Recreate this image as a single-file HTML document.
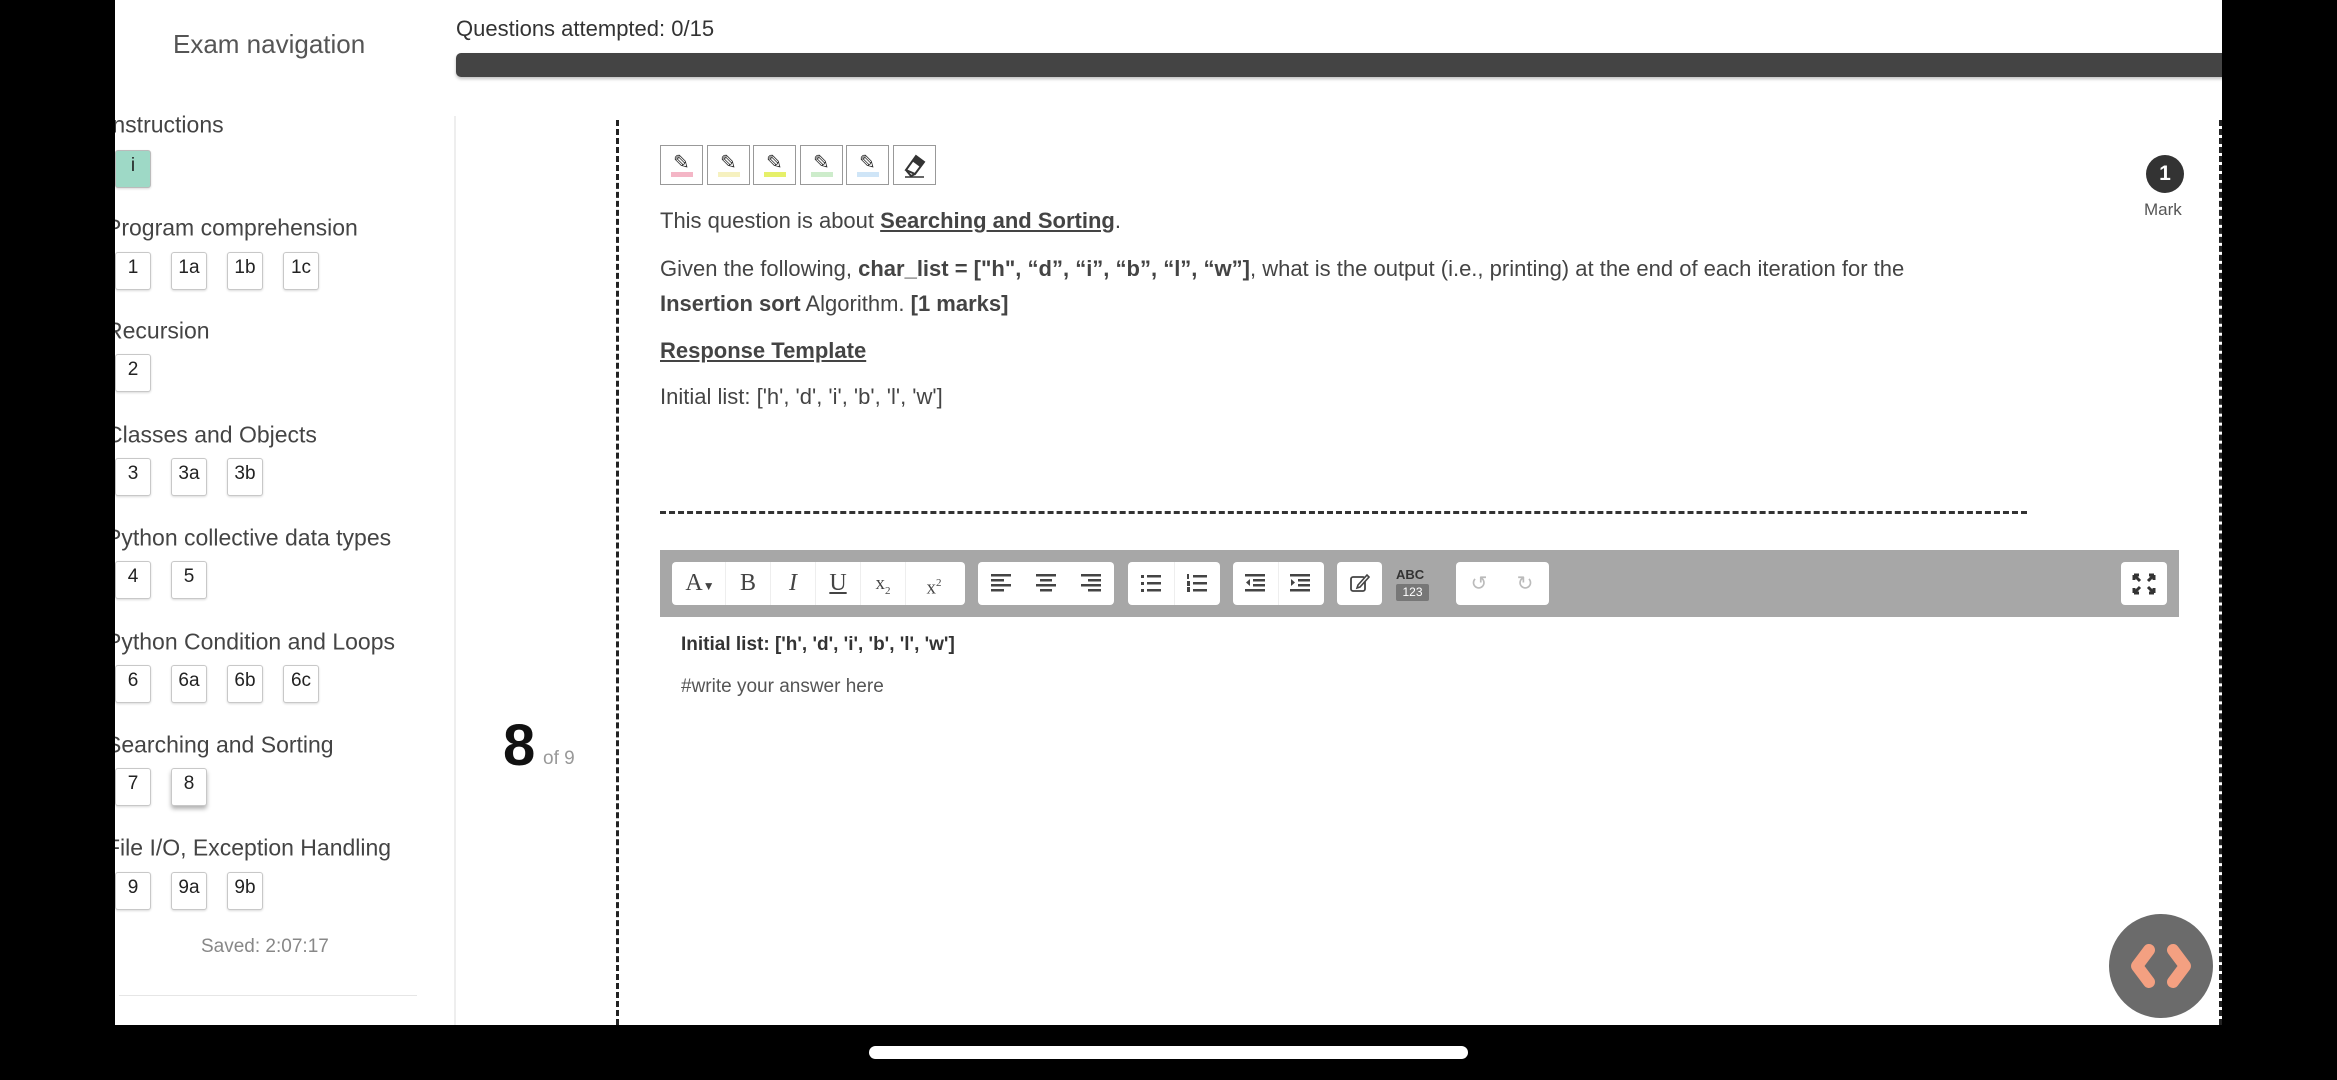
<!DOCTYPE html>
<html><head><meta charset="utf-8"><style>
*{margin:0;padding:0;box-sizing:border-box}
body{width:2337px;height:1080px;background:#000;position:relative;overflow:hidden;font-family:"Liberation Sans",sans-serif;color:#333}
#pg{position:absolute;left:115px;top:0;width:2107px;height:1025px;background:#fff;overflow:hidden}
.a{position:absolute;white-space:nowrap}
.h{position:absolute;left:-9px;font-size:23px;color:#444;transform:translateY(-50%)}
.b{position:absolute;width:36px;height:38px;border:1px solid #c8c8c8;border-radius:3px;font-size:19px;text-align:center;line-height:30px;color:#222;background:#fff;box-shadow:0 1px 2px rgba(0,0,0,.15)}
.hl{position:absolute;top:145px;width:43px;height:40px;border:1px solid #999;background:#fff}
.hl i{position:absolute;left:10px;bottom:7px;width:22px;height:5px}
.grp{position:absolute;top:562px;height:43px;background:#fff;border-radius:4px}
.ic{position:absolute;top:0;height:43px;line-height:43px;text-align:center;font-family:"Liberation Serif",serif;font-size:24px;color:#444}
.dv{position:absolute;top:0;height:43px;width:1px;background:#eee}
.sv{position:absolute;top:11px}
</style></head><body>
<div id="pg">
<div class="a" style="left:58px;top:29px;font-size:26px;color:#555">Exam navigation</div>
<div class="a" style="left:341px;top:16px;font-size:22px;color:#333">Questions attempted: 0/15</div>
<div class="a" style="left:341px;top:53px;width:1780px;height:24px;background:#444;border-radius:5px 0 0 5px;box-shadow:0 2px 3px rgba(0,0,0,.25)"></div>
<div class="a" style="left:339px;top:116px;width:2px;height:920px;background:#eee"></div>
<div class="a" style="left:4px;top:995px;width:298px;height:1px;background:#e6e6e6"></div>

<div class="h" style="top:125px">Instructions</div>
<div class="b" style="left:0;top:150px;background:#9ed9c6;border-color:#bbb">i</div>
<div class="h" style="top:228px">Program comprehension</div>
<div class="b" style="left:0;top:252px">1</div><div class="b" style="left:56px;top:252px">1a</div><div class="b" style="left:112px;top:252px">1b</div><div class="b" style="left:168px;top:252px">1c</div>
<div class="h" style="top:331px">Recursion</div>
<div class="b" style="left:0;top:354px">2</div>
<div class="h" style="top:435px">Classes and Objects</div>
<div class="b" style="left:0;top:458px">3</div><div class="b" style="left:56px;top:458px">3a</div><div class="b" style="left:112px;top:458px">3b</div>
<div class="h" style="top:538px">Python collective data types</div>
<div class="b" style="left:0;top:561px">4</div><div class="b" style="left:56px;top:561px">5</div>
<div class="h" style="top:642px">Python Condition and Loops</div>
<div class="b" style="left:0;top:665px">6</div><div class="b" style="left:56px;top:665px">6a</div><div class="b" style="left:112px;top:665px">6b</div><div class="b" style="left:168px;top:665px">6c</div>
<div class="h" style="top:745px">Searching and Sorting</div>
<div class="b" style="left:0;top:768px">7</div><div class="b" style="left:56px;top:768px;box-shadow:0 3px 4px rgba(0,0,0,.3)">8</div>
<div class="h" style="top:848px">File I/O, Exception Handling</div>
<div class="b" style="left:0;top:872px">9</div><div class="b" style="left:56px;top:872px">9a</div><div class="b" style="left:112px;top:872px">9b</div>
<div class="a" style="left:86px;top:936px;font-size:19px;color:#888">Saved: 2:07:17</div>

<div class="a" style="left:388px;top:712px;font-size:58px;font-weight:bold;color:#111">8</div>
<div class="a" style="left:428px;top:748px;font-size:19px;color:#999">of 9</div>
<div class="a" style="left:501px;top:120px;height:905px;border-left:3px dashed #222"></div>
<div class="a" style="left:2104px;top:120px;height:905px;border-left:3px dashed #222"></div>

<div class="hl" style="left:545px"><span class="a" style="left:12px;top:4px;font-size:20px;color:#333">✎</span><i style="background:#f4b6c6"></i></div>
<div class="hl" style="left:592px"><span class="a" style="left:12px;top:4px;font-size:20px;color:#333">✎</span><i style="background:#f6f1c0"></i></div>
<div class="hl" style="left:638px"><span class="a" style="left:12px;top:4px;font-size:20px;color:#333">✎</span><i style="background:#e6f06a"></i></div>
<div class="hl" style="left:685px"><span class="a" style="left:12px;top:4px;font-size:20px;color:#333">✎</span><i style="background:#cdeccb"></i></div>
<div class="hl" style="left:731px"><span class="a" style="left:12px;top:4px;font-size:20px;color:#333">✎</span><i style="background:#cfe5f7"></i></div>
<div class="hl" style="left:778px"><svg class="a" style="left:8px;top:6px" width="26" height="28" viewBox="0 0 26 28"><path d="M4 18 L14 4 L22 10 L13 22 Z M4 18 L9 24 L13 22" fill="none" stroke="#333" stroke-width="2"/><path d="M14 4 L22 10 L18 15 L10 9 Z" fill="#333"/><path d="M3 25 H22" stroke="#333" stroke-width="1.5"/></svg></div>

<div class="a" style="left:545px;top:208px;font-size:22px;color:#444">This question is about <b style="text-decoration:underline">Searching and Sorting</b>.</div>
<div class="a" style="left:545px;top:256px;font-size:22px;color:#444">Given the following, <b>char_list = ["h", “d”, “i”, “b”, “l”, “w”]</b>, what is the output (i.e., printing) at the end of each iteration for the</div>
<div class="a" style="left:545px;top:291px;font-size:22px;color:#444"><b>Insertion sort</b> Algorithm. <b>[1 marks]</b></div>
<div class="a" style="left:545px;top:338px;font-size:22px;color:#444;font-weight:bold;text-decoration:underline">Response Template</div>
<div class="a" style="left:545px;top:384px;font-size:22px;color:#444">Initial list: ['h', 'd', 'i', 'b', 'l', 'w']</div>
<div class="a" style="left:545px;top:511px;width:1367px;border-top:3px dashed #333"></div>

<div class="a" style="left:545px;top:550px;width:1519px;height:67px;background:#a7a7a7"></div>
<div class="grp" style="left:557px;width:293px">
 <div class="ic" style="left:6px;width:44px">A<span style="font-size:12px">▼</span></div><div class="dv" style="left:53px"></div>
 <div class="ic" style="left:54px;width:44px">B</div><div class="dv" style="left:98px"></div>
 <div class="ic" style="left:99px;width:44px;font-style:italic">I</div><div class="dv" style="left:143px"></div>
 <div class="ic" style="left:144px;width:44px;text-decoration:underline">U</div><div class="dv" style="left:188px"></div>
 <div class="ic" style="left:189px;width:44px;font-size:19px">x<sub style="font-size:11px">2</sub></div><div class="dv" style="left:233px"></div>
 <div class="ic" style="left:234px;width:56px;font-size:19px">x<sup style="font-size:11px">2</sup></div>
</div>
<div class="grp" style="left:863px;width:136px">
 <svg class="sv" style="left:13px" width="20" height="20"><g fill="#444"><rect x="0" y="1" width="20" height="2.5"/><rect x="0" y="6" width="13" height="2.5"/><rect x="0" y="11" width="20" height="2.5"/><rect x="0" y="16" width="13" height="2.5"/></g></svg>
 <svg class="sv" style="left:58px" width="20" height="20"><g fill="#444"><rect x="0" y="1" width="20" height="2.5"/><rect x="4" y="6" width="12" height="2.5"/><rect x="0" y="11" width="20" height="2.5"/><rect x="4" y="16" width="12" height="2.5"/></g></svg>
 <svg class="sv" style="left:103px" width="20" height="20"><g fill="#444"><rect x="0" y="1" width="20" height="2.5"/><rect x="7" y="6" width="13" height="2.5"/><rect x="0" y="11" width="20" height="2.5"/><rect x="7" y="16" width="13" height="2.5"/></g></svg>
</div>
<div class="grp" style="left:1013px;width:92px">
 <svg class="sv" style="left:13px" width="20" height="20"><g fill="#444"><rect x="0" y="2" width="3" height="3"/><rect x="6" y="2" width="14" height="2.5"/><rect x="0" y="9" width="3" height="3"/><rect x="6" y="9" width="14" height="2.5"/><rect x="0" y="16" width="3" height="3"/><rect x="6" y="16" width="14" height="2.5"/></g></svg>
 <div class="dv" style="left:46px"></div>
 <svg class="sv" style="left:59px" width="20" height="20"><g fill="#444"><rect x="0" y="1" width="2" height="5"/><rect x="0" y="8" width="3" height="5"/><rect x="0" y="14" width="3" height="5"/><rect x="6" y="2" width="14" height="2.5"/><rect x="6" y="9" width="14" height="2.5"/><rect x="6" y="16" width="14" height="2.5"/></g></svg>
</div>
<div class="grp" style="left:1118px;width:91px">
 <svg class="sv" style="left:12px" width="20" height="20"><g fill="#444"><rect x="0" y="1" width="20" height="2.5"/><rect x="8" y="6" width="12" height="2.5"/><rect x="8" y="11" width="12" height="2.5"/><rect x="0" y="16" width="20" height="2.5"/><path d="M5 6 L1 9.5 L5 13 Z"/></g></svg>
 <div class="dv" style="left:45px"></div>
 <svg class="sv" style="left:57px" width="20" height="20"><g fill="#444"><rect x="0" y="1" width="20" height="2.5"/><rect x="8" y="6" width="12" height="2.5"/><rect x="8" y="11" width="12" height="2.5"/><rect x="0" y="16" width="20" height="2.5"/><path d="M1 6 L5 9.5 L1 13 Z"/></g></svg>
</div>
<div class="grp" style="left:1222px;width:45px"><svg class="sv" style="left:13px" width="20" height="20"><rect x="1" y="4" width="14" height="14" rx="2" fill="none" stroke="#444" stroke-width="1.8"/><path d="M8 12 L17 2 L19 4 L10 14 L7 15 Z" fill="#fff" stroke="#444" stroke-width="1.6"/></svg></div>
<div class="a" style="left:1281px;top:567px;font-size:13px;font-weight:bold;color:#333">ABC</div>
<div class="a" style="left:1281px;top:584px;width:33px;height:17px;background:#777;color:#fff;font-size:12px;text-align:center;line-height:17px;border-radius:2px">123</div>
<div class="grp" style="left:1341px;width:93px">
 <div class="ic" style="left:0;width:46px;color:#bbb;font-family:'DejaVu Sans';font-size:20px">↺</div><div class="ic" style="left:46px;width:46px;color:#bbb;font-family:'DejaVu Sans';font-size:20px">↻</div>
</div>
<div class="grp" style="left:2006px;width:46px"><svg class="a" style="left:10px;top:10px" width="26" height="24" viewBox="0 0 26 24"><g stroke="#333" stroke-width="3" fill="none"><path d="M3 3 L9 9 M3 3 H8 M3 3 V8"/><path d="M23 3 L17 9 M23 3 H18 M23 3 V8"/><path d="M3 21 L9 15 M3 21 H8 M3 21 V16"/><path d="M23 21 L17 15 M23 21 H18 M23 21 V16"/></g></svg></div>

<div class="a" style="left:566px;top:634px;font-size:19px;font-weight:bold;color:#333">Initial list: ['h', 'd', 'i', 'b', 'l', 'w']</div>
<div class="a" style="left:566px;top:676px;font-size:19px;color:#555">#write your answer here</div>

<div class="a" style="left:2031px;top:155px;width:38px;height:38px;border-radius:50%;background:#333;color:#fff;font-weight:bold;font-size:21px;text-align:center;line-height:38px">1</div>
<div class="a" style="left:2029px;top:200px;font-size:17px;color:#555">Mark</div>

<div class="a" style="left:1994px;top:914px;width:104px;height:104px;border-radius:50%;background:#6b6b6b"></div>
<svg class="a" style="left:1994px;top:914px" width="104" height="104" viewBox="0 0 104 104"><g stroke="#f4a081" stroke-width="12" stroke-linecap="round" stroke-linejoin="round" fill="none"><path d="M40 36 L28 52 L40 68"/><path d="M64 36 L76 52 L64 68"/></g></svg>
</div>
<div class="a" style="left:869px;top:1046px;width:599px;height:13px;border-radius:7px;background:#fff"></div>
</body></html>
